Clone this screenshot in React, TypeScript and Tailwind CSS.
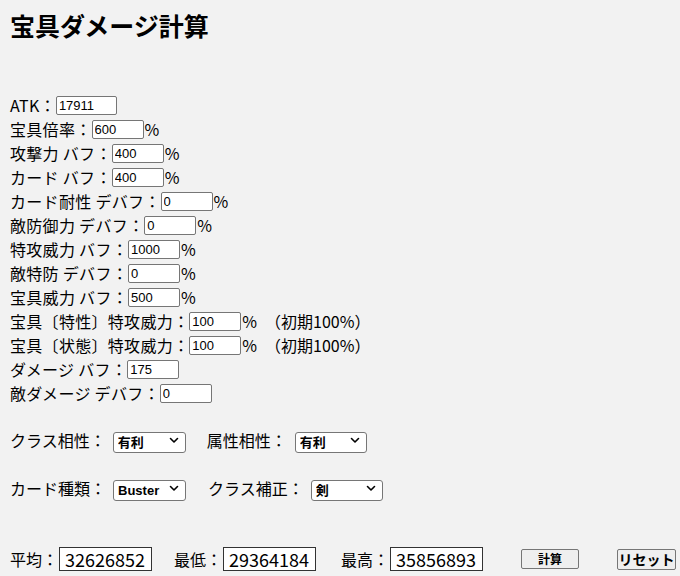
import React from 'react';

const inputCls =
  'h-[19px] border border-[#767676] rounded-[2px] bg-white px-[2px] text-[13px] leading-none text-black font-["Liberation_Sans",Arial,sans-serif] outline-none shrink-0';

interface RowProps {
  label: string;
  value: string;
  wide?: boolean;
  percent?: boolean;
  note?: boolean;
}

const Row: React.FC<RowProps> = ({ label, value, wide, percent, note }) => (
  <div className="flex items-center h-6 whitespace-nowrap">
    <span className="tracking-[0.3px]">{label}：</span>
    <input defaultValue={value} className={`${inputCls} ${wide ? 'w-[61px]' : 'w-[52px]'}`} />
    {percent && <span className="ml-px">%</span>}
    {note && <span className="ml-[8px]">（初期100%）</span>}
  </div>
);

const Chevron = () => (
  <svg className="absolute right-[7px] top-1/2 -translate-y-1/2 w-[10px] h-[10px]" viewBox="0 0 10 10" fill="none">
    <path d="M1.5 3.5L5 7L8.5 3.5" stroke="#000" strokeWidth="1.6" strokeLinecap="round" strokeLinejoin="round" />
  </svg>
);

const Select: React.FC<{ value: string; options: string[]; w: string }> = ({ value, options, w }) => (
  <div className={`relative shrink-0 ${w}`}>
    <select
      defaultValue={value}
      className='appearance-none w-full h-[21px] border border-[#767676] rounded-[3px] bg-white pl-[4px] pr-5 text-[13px] font-bold leading-none text-black font-["Liberation_Sans","Noto_Sans_CJK_JP",sans-serif] outline-none'
    >
      {options.map((o) => (
        <option key={o}>{o}</option>
      ))}
    </select>
    <Chevron />
  </div>
);

const Result: React.FC<{ label: string; value: string }> = ({ label, value }) => (
  <div className="flex items-center shrink-0 whitespace-nowrap">
    <span>{label}：</span>
    <div className="ml-px h-[24px] w-[93px] border border-[#333] bg-white flex items-center pl-[5px] text-[18px] leading-none">
      {value}
    </div>
  </div>
);

export default function App() {
  return (
    <div className="w-[680px] h-[576px] bg-[#f2f2f2] text-black text-[16px] px-[10px] pt-[9px] font-['Noto_Sans_CJK_JP','Liberation_Sans',sans-serif] overflow-hidden">
      <h1 className="text-[25px] font-bold leading-8">宝具ダメージ計算</h1>

      <div className="mt-[52px]">
        <Row label="ATK" value="17911" wide />
        <Row label="宝具倍率" value="600" percent />
        <Row label="攻撃力 バフ" value="400" percent />
        <Row label="カード バフ" value="400" percent />
        <Row label="カード耐性 デバフ" value="0" percent />
        <Row label="敵防御力 デバフ" value="0" percent />
        <Row label="特攻威力 バフ" value="1000" percent />
        <Row label="敵特防 デバフ" value="0" percent />
        <Row label="宝具威力 バフ" value="500" percent />
        <Row label="宝具〔特性〕特攻威力" value="100" percent note />
        <Row label="宝具〔状態〕特攻威力" value="100" percent note />
        <Row label="ダメージ バフ" value="175" />
        <Row label="敵ダメージ デバフ" value="0" />
      </div>

      <div className="flex items-center h-6 mt-[23px] whitespace-nowrap">
        <span>クラス相性：</span>
        <span className="ml-[7px]" />
        <Select value="有利" options={['有利', '等倍', '不利']} w="w-[73px]" />
        <span className="ml-[21px]">属性相性：</span>
        <span className="ml-[8px]" />
        <Select value="有利" options={['有利', '等倍', '不利']} w="w-[72px]" />
      </div>

      <div className="flex items-center h-6 mt-[24px] whitespace-nowrap">
        <span>カード種類：</span>
        <span className="ml-[7px]" />
        <Select value="Buster" options={['Buster', 'Arts', 'Quick']} w="w-[73px]" />
        <span className="ml-[22px]">クラス補正：</span>
        <span className="ml-[7px]" />
        <Select value="剣" options={['剣', '弓', '槍']} w="w-[72px]" />
      </div>

      <div className="flex items-center h-[26px] mt-[46px] whitespace-nowrap">
        <Result label="平均" value="32626852" />
        <div className="ml-[22px] shrink-0">
          <Result label="最低" value="29364184" />
        </div>
        <div className="ml-[25px] shrink-0">
          <Result label="最高" value="35856893" />
        </div>
        <button className="ml-[38px] shrink-0 w-[58px] h-[20px] border border-[#767676] rounded-[2px] bg-[#efefef] text-[12px] font-bold leading-none">
          計算
        </button>
        <button className="ml-[38px] shrink-0 w-[59px] h-[21px] border border-[#767676] rounded-[2px] bg-[#efefef] text-[14px] font-bold leading-none whitespace-nowrap">
          リセット
        </button>
      </div>
    </div>
  );
}
